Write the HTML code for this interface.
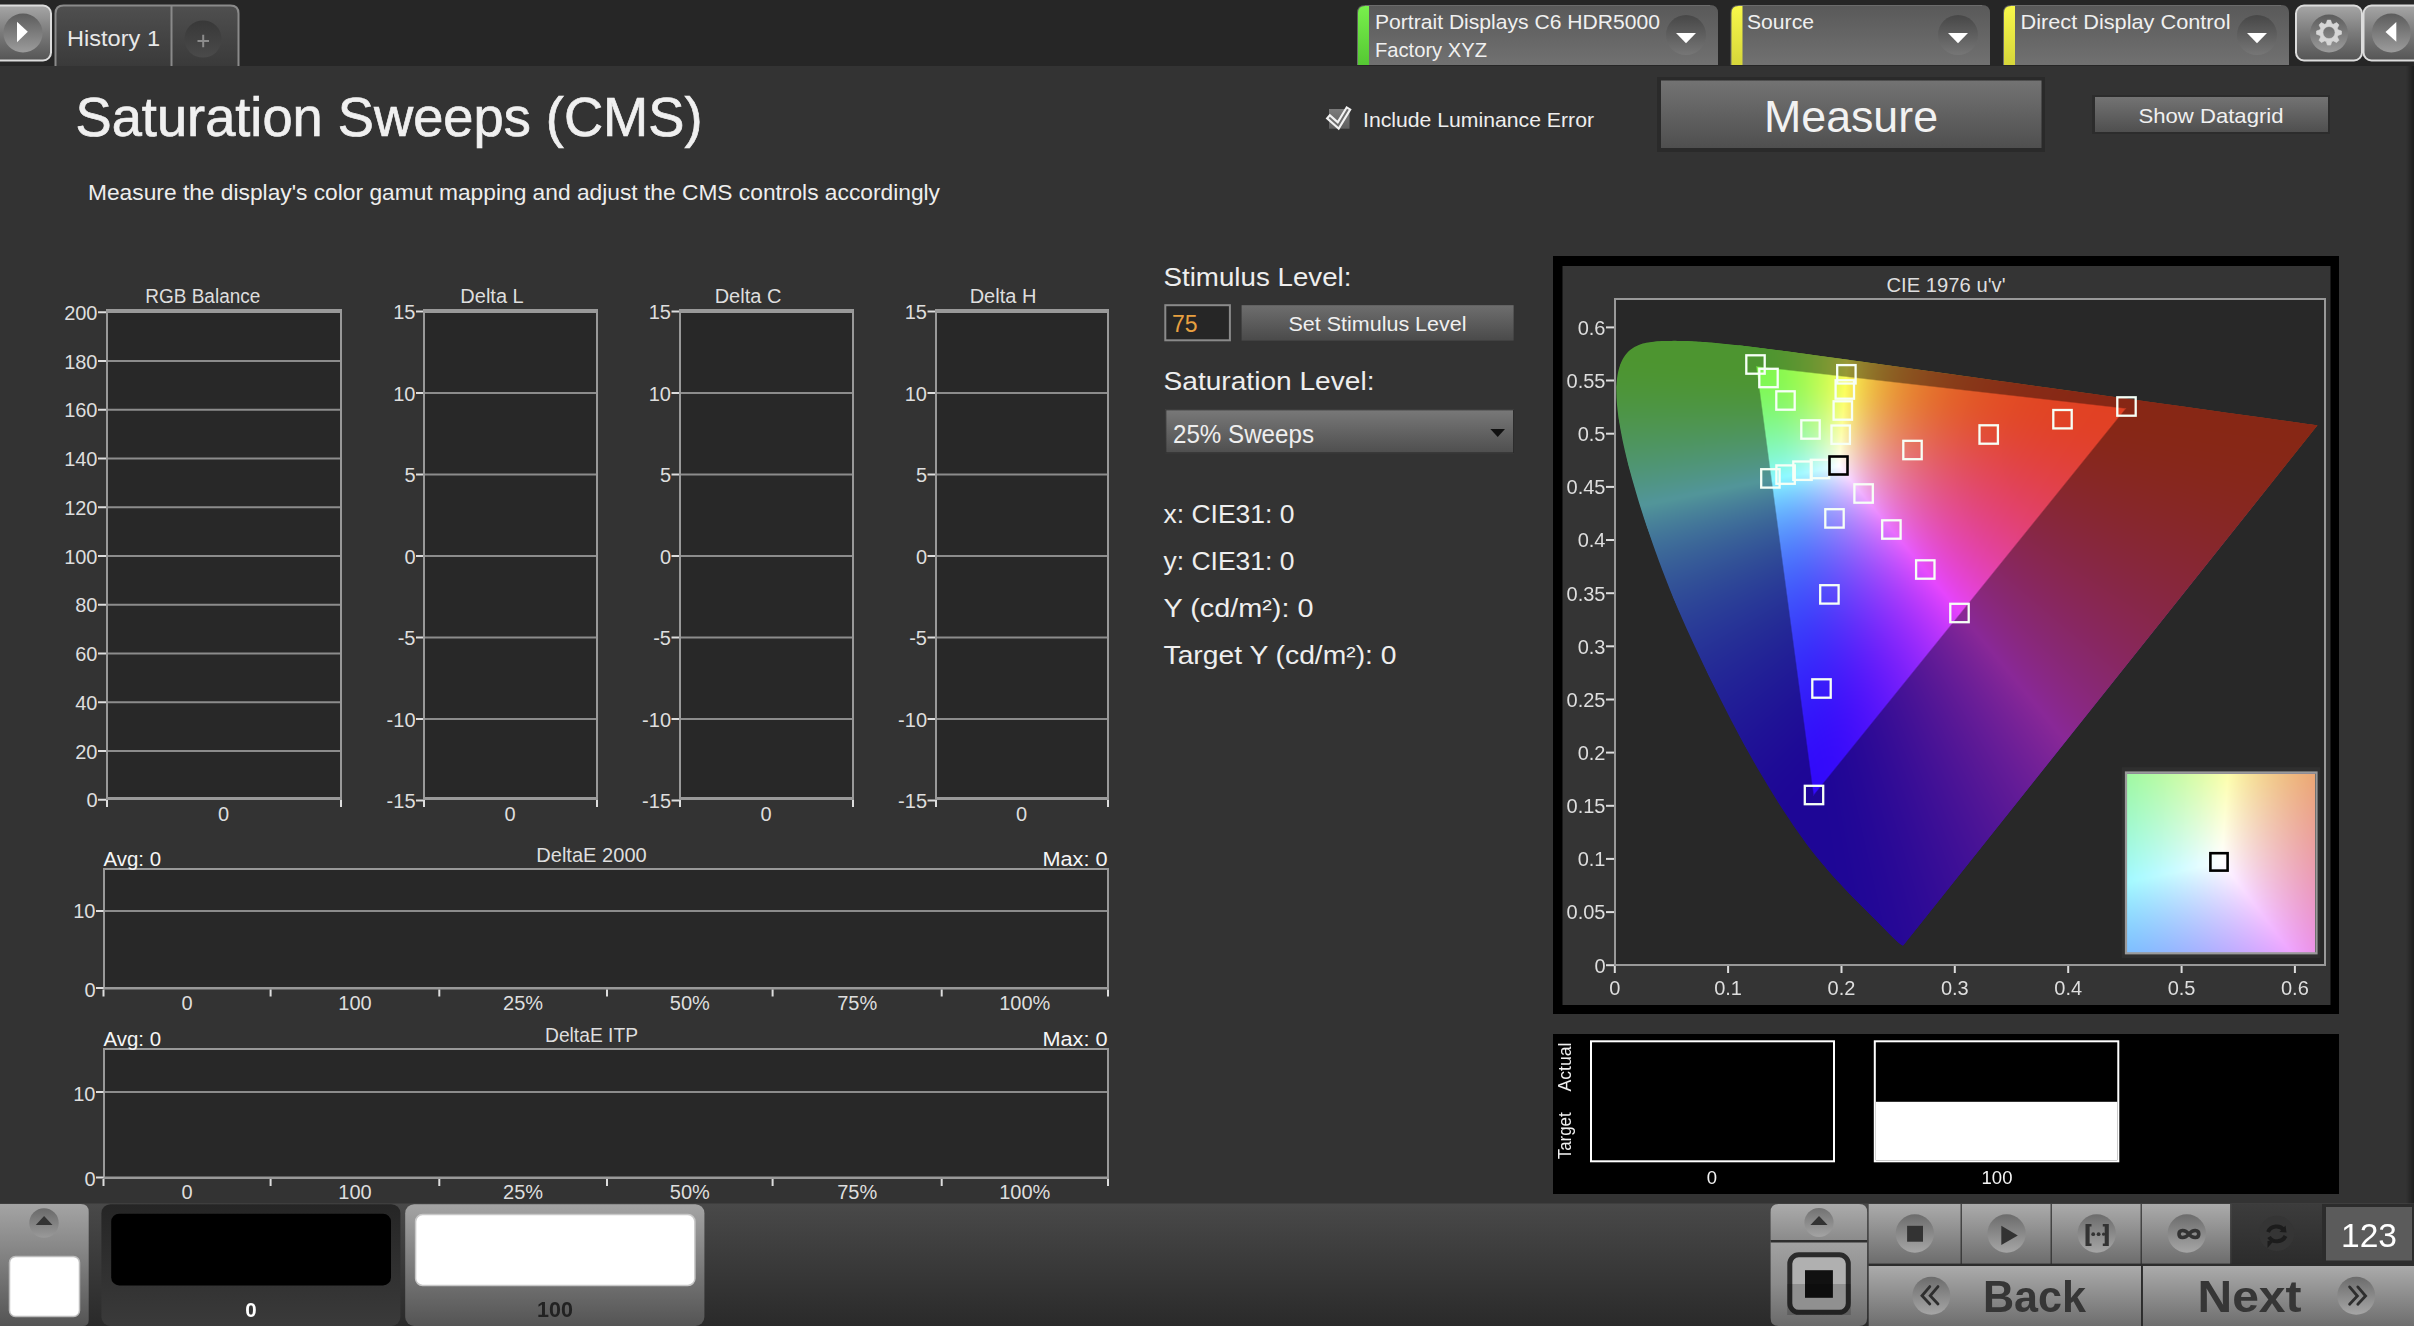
<!DOCTYPE html>
<html><head><meta charset="utf-8"><title>Saturation Sweeps (CMS)</title>
<style>
html,body{margin:0;padding:0;width:2414px;height:1326px;overflow:hidden;background:#333;}
svg{position:absolute;left:0;top:0;font-family:'Liberation Sans', sans-serif;}
canvas{position:absolute;}
</style></head><body>
<svg width="2414" height="1326" viewBox="0 0 2414 1326"><defs><linearGradient id="gBtn" x1="0" y1="0" x2="0" y2="1"><stop offset="0" stop-color="#a6a6a6"/><stop offset="0.5" stop-color="#7a7a7a"/><stop offset="1" stop-color="#555"/></linearGradient><linearGradient id="gCirc" x1="0" y1="0" x2="0" y2="1"><stop offset="0" stop-color="#5c5c5c"/><stop offset="1" stop-color="#9c9c9c"/></linearGradient><linearGradient id="gTab" x1="0" y1="0" x2="0" y2="1"><stop offset="0" stop-color="#4f4f4f"/><stop offset="1" stop-color="#3a3a3a"/></linearGradient><linearGradient id="gTabC" x1="0" y1="0" x2="0" y2="1"><stop offset="0" stop-color="#383838"/><stop offset="1" stop-color="#4a4a4a"/></linearGradient><linearGradient id="gDD" x1="0" y1="0" x2="0" y2="1"><stop offset="0" stop-color="#595959"/><stop offset="1" stop-color="#717171"/></linearGradient><linearGradient id="gDDc" x1="0" y1="0" x2="0" y2="1"><stop offset="0" stop-color="#474747"/><stop offset="1" stop-color="#767676"/></linearGradient><linearGradient id="gGreen" x1="0" y1="0" x2="0" y2="1"><stop offset="0" stop-color="#78f04c"/><stop offset="1" stop-color="#55c833"/></linearGradient><linearGradient id="gYel" x1="0" y1="0" x2="0" y2="1"><stop offset="0" stop-color="#f8f84a"/><stop offset="1" stop-color="#d6d63a"/></linearGradient><linearGradient id="gMeas" x1="0" y1="0" x2="0" y2="1"><stop offset="0" stop-color="#737373"/><stop offset="1" stop-color="#4f4f4f"/></linearGradient><linearGradient id="gSet" x1="0" y1="0" x2="0" y2="1"><stop offset="0" stop-color="#6e6e6e"/><stop offset="1" stop-color="#4a4a4a"/></linearGradient><linearGradient id="gSel" x1="0" y1="0" x2="0" y2="1"><stop offset="0" stop-color="#797979"/><stop offset="1" stop-color="#4e4e4e"/></linearGradient><linearGradient id="gBar" x1="0" y1="0" x2="0" y2="1"><stop offset="0" stop-color="#494949"/><stop offset="1" stop-color="#2a2a2a"/></linearGradient><linearGradient id="gTileL" x1="0" y1="0" x2="0" y2="1"><stop offset="0" stop-color="#a4a4a4"/><stop offset="1" stop-color="#545454"/></linearGradient><linearGradient id="gCtl" x1="0" y1="0" x2="0" y2="1"><stop offset="0" stop-color="#ababab"/><stop offset="1" stop-color="#6c6c6c"/></linearGradient><linearGradient id="gCtlC" x1="0" y1="0" x2="0" y2="1"><stop offset="0" stop-color="#6c6c6c"/><stop offset="1" stop-color="#a6a6a6"/></linearGradient><linearGradient id="gCtlTop" x1="0" y1="0" x2="0" y2="1"><stop offset="0" stop-color="#ababab"/><stop offset="1" stop-color="#8a8a8a"/></linearGradient><linearGradient id="gCtlBot" x1="0" y1="0" x2="0" y2="1"><stop offset="0" stop-color="#a2a2a2"/><stop offset="0.5" stop-color="#8c8c8c"/><stop offset="1" stop-color="#6a6a6a"/></linearGradient><linearGradient id="gTile2" x1="0" y1="0" x2="0" y2="1"><stop offset="0" stop-color="#252525"/><stop offset="1" stop-color="#3a3a3a"/></linearGradient><linearGradient id="gChk" x1="0" y1="0" x2="0" y2="1"><stop offset="0" stop-color="#7c7c7c"/><stop offset="1" stop-color="#5e5e5e"/></linearGradient><linearGradient id="gDark" x1="0" y1="0" x2="0" y2="1"><stop offset="0" stop-color="#3c3c3c"/><stop offset="1" stop-color="#2c2c2c"/></linearGradient><linearGradient id="gShadowR" x1="0" y1="0" x2="1" y2="0"><stop offset="0" stop-color="rgba(0,0,0,0)"/><stop offset="1" stop-color="rgba(0,0,0,0.42)"/></linearGradient><linearGradient id="fbV" gradientUnits="userSpaceOnUse" x1="0" y1="345" x2="0" y2="945"><stop offset="0" stop-color="#4d9a32"/><stop offset="0.2" stop-color="#4e9a48"/><stop offset="0.3" stop-color="#4a9090"/><stop offset="0.5" stop-color="#2c4090"/><stop offset="0.75" stop-color="#1e1294"/><stop offset="1" stop-color="#200896"/></linearGradient><linearGradient id="fbR" gradientUnits="userSpaceOnUse" x1="1900" y1="930" x2="2300" y2="430"><stop offset="0" stop-color="#22089a"/><stop offset="0.35" stop-color="#5a1c96"/><stop offset="0.6" stop-color="#862a7a"/><stop offset="1" stop-color="#8a2a1c"/></linearGradient><linearGradient id="fbTop" gradientUnits="userSpaceOnUse" x1="1760" y1="0" x2="2130" y2="0"><stop offset="0" stop-color="#4d9a32"/><stop offset="0.3" stop-color="#8a8c28"/><stop offset="0.55" stop-color="#8c5a20"/><stop offset="1" stop-color="#8a2a1a"/></linearGradient><linearGradient id="fbG" gradientUnits="userSpaceOnUse" x1="1757" y1="367" x2="1960" y2="600"><stop offset="0" stop-color="rgba(128,248,80,1)"/><stop offset="1" stop-color="rgba(128,248,80,0)"/></linearGradient><linearGradient id="fbB" gradientUnits="userSpaceOnUse" x1="1813" y1="795" x2="1900" y2="520"><stop offset="0" stop-color="rgba(50,10,250,1)"/><stop offset="1" stop-color="rgba(50,10,250,0)"/></linearGradient><linearGradient id="fbRd" gradientUnits="userSpaceOnUse" x1="2125" y1="408" x2="1880" y2="520"><stop offset="0" stop-color="rgba(225,65,35,1)"/><stop offset="1" stop-color="rgba(225,65,35,0)"/></linearGradient><radialGradient id="fbW" cx="1839" cy="466" r="150" gradientUnits="userSpaceOnUse"><stop offset="0" stop-color="#fff"/><stop offset="0.35" stop-color="rgba(255,255,255,0.85)"/><stop offset="1" stop-color="rgba(255,255,255,0)"/></radialGradient><clipPath id="fbClip"><path d="M1903.3 945.3 L1902.4 945.3 L1900.7 944.3 L1897.8 941.9 L1893.8 938.2 L1888.1 932.6 L1880.8 925.1 L1871.7 915.9 L1859.7 904.0 L1845.3 889.4 L1827.6 870.0 L1806.3 843.7 L1778.1 802.3 L1744.8 745.8 L1708.7 675.4 L1673.9 599.3 L1646.7 526.3 L1628.3 464.7 L1618.7 418.9 L1616.4 387.0 L1620.1 365.1 L1628.7 351.2 L1641.0 344.2 L1655.6 341.5 L1671.5 340.9 L1687.7 341.1 L1704.6 342.1 L1722.8 343.7 L1742.6 345.8 L1764.3 348.5 L1788.4 351.6 L1815.0 355.3 L1844.5 359.3 L1876.9 363.8 L1912.2 368.7 L1950.3 374.1 L1990.6 379.7 L2032.0 385.5 L2072.2 391.1 L2111.3 396.5 L2146.7 401.4 L2177.9 405.8 L2204.6 409.6 L2226.9 412.7 L2245.7 415.3 L2261.9 417.6 L2275.7 419.5 L2286.9 421.0 L2295.5 422.2 L2302.3 423.2 L2307.3 423.9 L2310.6 424.3 L2313.3 424.7 L2317.5 425.3 Z"/></clipPath><radialGradient id="fbIn" cx="0.5" cy="0.5" r="0.7"><stop offset="0" stop-color="#fff"/><stop offset="1" stop-color="#c8b8f0"/></radialGradient></defs><rect x="0" y="0" width="2414" height="1326" fill="#333333" /><rect x="0" y="0" width="2414" height="66" fill="#262626" /><rect x="-12" y="5.5" width="63" height="55" rx="8" fill="url(#gBtn)" stroke="#dcdcdc" stroke-width="2"/><circle cx="23" cy="33" r="19.6" fill="url(#gCirc)"/><path d="M17 21.7 L27.8 31.8 L17 42.2 Z" fill="#fff"/><path d="M55.5 66 V13.5 Q55.5 5.5 63.5 5.5 H230.5 Q238.5 5.5 238.5 13.5 V66" fill="url(#gTab)" stroke="#8a8a8a" stroke-width="2"/><line x1="171.5" y1="6" x2="171.5" y2="66" stroke="#8a8a8a" stroke-width="2"/><circle cx="203" cy="39" r="18.6" fill="url(#gTabC)"/><path d="M197.5 41 H209 M203.2 34.8 V47.2" stroke="#8c8c8c" stroke-width="2"/><text x="67.0" y="46.0" font-size="22" fill="#e8e8e8" textLength="93.0" lengthAdjust="spacingAndGlyphs" >History 1</text><path d="M1357 65 V13 Q1357 5 1365 5 H1710 Q1718 5 1718 13 V65 Z" fill="url(#gDD)"/><path d="M1358 65 V13 Q1358 6 1365 6 H1369 V65 Z" fill="url(#gGreen)"/><line x1="1365" y1="5.5" x2="1710" y2="5.5" stroke="#6c6c6c" stroke-width="1"/><circle cx="1686" cy="35" r="20" fill="url(#gDDc)"/><path d="M1676 33 H1696 L1686 43.2 Z" fill="#fff"/><text x="1375.0" y="28.8" font-size="20.5" fill="#f0f0f0" textLength="285.0" lengthAdjust="spacingAndGlyphs" >Portrait Displays C6 HDR5000</text><text x="1375.0" y="57.3" font-size="20.5" fill="#f0f0f0" textLength="112.0" lengthAdjust="spacingAndGlyphs" >Factory XYZ</text><path d="M1730.5 65 V13 Q1730.5 5 1738.5 5 H1982 Q1990 5 1990 13 V65 Z" fill="url(#gDD)"/><path d="M1731.5 65 V13 Q1731.5 6 1738.5 6 H1742.5 V65 Z" fill="url(#gYel)"/><line x1="1738.5" y1="5.5" x2="1982" y2="5.5" stroke="#6c6c6c" stroke-width="1"/><circle cx="1958" cy="35" r="20" fill="url(#gDDc)"/><path d="M1948 33 H1968 L1958 43.2 Z" fill="#fff"/><text x="1747.0" y="28.8" font-size="20.5" fill="#f0f0f0" textLength="67.0" lengthAdjust="spacingAndGlyphs" >Source</text><path d="M2003 65 V13 Q2003 5 2011 5 H2281 Q2289 5 2289 13 V65 Z" fill="url(#gDD)"/><path d="M2004 65 V13 Q2004 6 2011 6 H2015 V65 Z" fill="url(#gYel)"/><line x1="2011" y1="5.5" x2="2281" y2="5.5" stroke="#6c6c6c" stroke-width="1"/><circle cx="2257" cy="35" r="20" fill="url(#gDDc)"/><path d="M2247 33 H2267 L2257 43.2 Z" fill="#fff"/><text x="2020.5" y="28.8" font-size="20.5" fill="#f0f0f0" textLength="210.0" lengthAdjust="spacingAndGlyphs" >Direct Display Control</text><rect x="2296" y="5.5" width="66" height="55" rx="8" fill="url(#gBtn)" stroke="#dcdcdc" stroke-width="2"/><circle cx="2329" cy="33.5" r="19" fill="url(#gCirc)"/><path d="M2326.22 23.62 L2327.37 20.11 L2330.63 20.11 L2331.78 23.62 L2332.60 23.92 L2333.39 24.29 L2336.68 22.61 L2338.99 24.92 L2337.31 28.21 L2337.68 29.00 L2337.98 29.82 L2341.49 30.97 L2341.49 34.23 L2337.98 35.38 L2337.68 36.20 L2337.31 36.99 L2338.99 40.28 L2336.68 42.59 L2333.39 40.91 L2332.60 41.28 L2331.78 41.58 L2330.63 45.09 L2327.37 45.09 L2326.22 41.58 L2325.40 41.28 L2324.61 40.91 L2321.32 42.59 L2319.01 40.28 L2320.69 36.99 L2320.32 36.20 L2320.02 35.38 L2316.51 34.23 L2316.51 30.97 L2320.02 29.82 L2320.32 29.00 L2320.69 28.21 L2319.01 24.92 L2321.32 22.61 L2324.61 24.29 L2325.40 23.92 Z M2335.1 32.6 A6.1 6.1 0 1 0 2322.9 32.6 A6.1 6.1 0 1 0 2335.1 32.6 Z" fill="#d6d6d6" fill-rule="evenodd" stroke="#d6d6d6" stroke-width="0.6" stroke-linejoin="round"/><rect x="2363.5" y="5.5" width="66" height="55" rx="8" fill="url(#gBtn)" stroke="#dcdcdc" stroke-width="2"/><circle cx="2391.3" cy="33" r="19.5" fill="url(#gCirc)"/><path d="M2396.3 22 V41.8 L2385.5 32 Z" fill="#fff"/><text x="75.5" y="136.0" font-size="55" fill="#f0f0f0" textLength="627.0" lengthAdjust="spacingAndGlyphs" stroke="#f0f0f0" stroke-width="0.7">Saturation Sweeps (CMS)</text><text x="88.0" y="200.0" font-size="22.5" fill="#eeeeee" textLength="852.0" lengthAdjust="spacingAndGlyphs" >Measure the display's color gamut mapping and adjust the CMS controls accordingly</text><rect x="1329" y="109" width="20.5" height="19.7" fill="url(#gChk)"/><path d="M1330 118.2 L1338.2 125.4 L1347.4 110.2" stroke="#f2f2f2" stroke-width="6.2" fill="none" stroke-linejoin="miter" stroke-linecap="square"/><path d="M1330 118.2 L1338.2 125.4 L1347.4 110.2" stroke="#6e6e6e" stroke-width="2.0" fill="none" stroke-linejoin="miter" stroke-linecap="square"/><text x="1363.0" y="127.0" font-size="21" fill="#eeeeee" textLength="231.0" lengthAdjust="spacingAndGlyphs" >Include Luminance Error</text><rect x="1657" y="77" width="388" height="75" fill="#2a2a2a" /><rect x="1661" y="80.5" width="380.5" height="67.5" fill="url(#gMeas)" /><text x="1764.0" y="131.5" font-size="45" fill="#f2f2f2" textLength="174.0" lengthAdjust="spacingAndGlyphs" >Measure</text><rect x="2092" y="95" width="238" height="39" fill="#2c2c2c" /><rect x="2095" y="97" width="233" height="35" fill="url(#gMeas)" /><text x="2138.5" y="122.8" font-size="21" fill="#f0f0f0" textLength="145.0" lengthAdjust="spacingAndGlyphs" >Show Datagrid</text><rect x="106" y="309" width="235" height="491" fill="#282828" /><rect x="98.0" y="311.25" width="8.0" height="2" fill="#dddddd" /><text x="97.5" y="319.9" font-size="20" fill="#dedede" text-anchor="end" >200</text><rect x="106" y="360.0" width="235" height="2" fill="#8c8c8c" /><rect x="98.0" y="360.0" width="8.0" height="2" fill="#dddddd" /><text x="97.5" y="368.6" font-size="20" fill="#dedede" text-anchor="end" >180</text><rect x="106" y="408.75" width="235" height="2" fill="#8c8c8c" /><rect x="98.0" y="408.75" width="8.0" height="2" fill="#dddddd" /><text x="97.5" y="417.4" font-size="20" fill="#dedede" text-anchor="end" >160</text><rect x="106" y="457.5" width="235" height="2" fill="#8c8c8c" /><rect x="98.0" y="457.5" width="8.0" height="2" fill="#dddddd" /><text x="97.5" y="466.1" font-size="20" fill="#dedede" text-anchor="end" >140</text><rect x="106" y="506.25" width="235" height="2" fill="#8c8c8c" /><rect x="98.0" y="506.25" width="8.0" height="2" fill="#dddddd" /><text x="97.5" y="514.9" font-size="20" fill="#dedede" text-anchor="end" >120</text><rect x="106" y="555.0" width="235" height="2" fill="#8c8c8c" /><rect x="98.0" y="555.0" width="8.0" height="2" fill="#dddddd" /><text x="97.5" y="563.6" font-size="20" fill="#dedede" text-anchor="end" >100</text><rect x="106" y="603.75" width="235" height="2" fill="#8c8c8c" /><rect x="98.0" y="603.75" width="8.0" height="2" fill="#dddddd" /><text x="97.5" y="612.4" font-size="20" fill="#dedede" text-anchor="end" >80</text><rect x="106" y="652.5" width="235" height="2" fill="#8c8c8c" /><rect x="98.0" y="652.5" width="8.0" height="2" fill="#dddddd" /><text x="97.5" y="661.1" font-size="20" fill="#dedede" text-anchor="end" >60</text><rect x="106" y="701.25" width="235" height="2" fill="#8c8c8c" /><rect x="98.0" y="701.25" width="8.0" height="2" fill="#dddddd" /><text x="97.5" y="709.9" font-size="20" fill="#dedede" text-anchor="end" >40</text><rect x="106" y="750.0" width="235" height="2" fill="#8c8c8c" /><rect x="98.0" y="750.0" width="8.0" height="2" fill="#dddddd" /><text x="97.5" y="758.6" font-size="20" fill="#dedede" text-anchor="end" >20</text><rect x="98.0" y="798.75" width="8.0" height="2" fill="#dddddd" /><text x="97.5" y="807.4" font-size="20" fill="#dedede" text-anchor="end" >0</text><rect x="106" y="309" width="236" height="4" fill="#999999" /><rect x="106" y="797" width="236" height="3" fill="#999999" /><rect x="106" y="309" width="2" height="491" fill="#999999" /><rect x="340" y="309" width="2" height="491" fill="#999999" /><rect x="106" y="800" width="2" height="7" fill="#dddddd" /><rect x="340" y="800" width="2" height="7" fill="#dddddd" /><text x="223.5" y="821.0" font-size="20" fill="#dedede" text-anchor="middle" >0</text><text x="202.8" y="303.0" font-size="20" fill="#dedede" text-anchor="middle" textLength="115.0" lengthAdjust="spacingAndGlyphs" >RGB Balance</text><rect x="423" y="309" width="174" height="491" fill="#282828" /><rect x="416.0" y="310.5" width="7.0" height="2" fill="#dddddd" /><text x="415.5" y="319.1" font-size="20" fill="#dedede" text-anchor="end" >15</text><rect x="423" y="392.0" width="174" height="2" fill="#8c8c8c" /><rect x="416.0" y="392.0" width="7.0" height="2" fill="#dddddd" /><text x="415.5" y="400.6" font-size="20" fill="#dedede" text-anchor="end" >10</text><rect x="423" y="473.5" width="174" height="2" fill="#8c8c8c" /><rect x="416.0" y="473.5" width="7.0" height="2" fill="#dddddd" /><text x="415.5" y="482.1" font-size="20" fill="#dedede" text-anchor="end" >5</text><rect x="423" y="555.0" width="174" height="2" fill="#8c8c8c" /><rect x="416.0" y="555.0" width="7.0" height="2" fill="#dddddd" /><text x="415.5" y="563.6" font-size="20" fill="#dedede" text-anchor="end" >0</text><rect x="423" y="636.5" width="174" height="2" fill="#8c8c8c" /><rect x="416.0" y="636.5" width="7.0" height="2" fill="#dddddd" /><text x="415.5" y="645.1" font-size="20" fill="#dedede" text-anchor="end" >-5</text><rect x="423" y="718.0" width="174" height="2" fill="#8c8c8c" /><rect x="416.0" y="718.0" width="7.0" height="2" fill="#dddddd" /><text x="415.5" y="726.6" font-size="20" fill="#dedede" text-anchor="end" >-10</text><rect x="416.0" y="799.5" width="7.0" height="2" fill="#dddddd" /><text x="415.5" y="808.1" font-size="20" fill="#dedede" text-anchor="end" >-15</text><rect x="423" y="309" width="175" height="4" fill="#999999" /><rect x="423" y="797" width="175" height="3" fill="#999999" /><rect x="423" y="309" width="2" height="491" fill="#999999" /><rect x="596" y="309" width="2" height="491" fill="#999999" /><rect x="423" y="800" width="2" height="7" fill="#dddddd" /><rect x="596" y="800" width="2" height="7" fill="#dddddd" /><text x="510.0" y="821.0" font-size="20" fill="#dedede" text-anchor="middle" >0</text><text x="492.0" y="303.0" font-size="20" fill="#dedede" text-anchor="middle" >Delta L</text><rect x="679" y="309" width="174" height="491" fill="#282828" /><rect x="671.5" y="310.5" width="7.5" height="2" fill="#dddddd" /><text x="671.0" y="319.1" font-size="20" fill="#dedede" text-anchor="end" >15</text><rect x="679" y="392.0" width="174" height="2" fill="#8c8c8c" /><rect x="671.5" y="392.0" width="7.5" height="2" fill="#dddddd" /><text x="671.0" y="400.6" font-size="20" fill="#dedede" text-anchor="end" >10</text><rect x="679" y="473.5" width="174" height="2" fill="#8c8c8c" /><rect x="671.5" y="473.5" width="7.5" height="2" fill="#dddddd" /><text x="671.0" y="482.1" font-size="20" fill="#dedede" text-anchor="end" >5</text><rect x="679" y="555.0" width="174" height="2" fill="#8c8c8c" /><rect x="671.5" y="555.0" width="7.5" height="2" fill="#dddddd" /><text x="671.0" y="563.6" font-size="20" fill="#dedede" text-anchor="end" >0</text><rect x="679" y="636.5" width="174" height="2" fill="#8c8c8c" /><rect x="671.5" y="636.5" width="7.5" height="2" fill="#dddddd" /><text x="671.0" y="645.1" font-size="20" fill="#dedede" text-anchor="end" >-5</text><rect x="679" y="718.0" width="174" height="2" fill="#8c8c8c" /><rect x="671.5" y="718.0" width="7.5" height="2" fill="#dddddd" /><text x="671.0" y="726.6" font-size="20" fill="#dedede" text-anchor="end" >-10</text><rect x="671.5" y="799.5" width="7.5" height="2" fill="#dddddd" /><text x="671.0" y="808.1" font-size="20" fill="#dedede" text-anchor="end" >-15</text><rect x="679" y="309" width="175" height="4" fill="#999999" /><rect x="679" y="797" width="175" height="3" fill="#999999" /><rect x="679" y="309" width="2" height="491" fill="#999999" /><rect x="852" y="309" width="2" height="491" fill="#999999" /><rect x="679" y="800" width="2" height="7" fill="#dddddd" /><rect x="852" y="800" width="2" height="7" fill="#dddddd" /><text x="766.0" y="821.0" font-size="20" fill="#dedede" text-anchor="middle" >0</text><text x="748.0" y="303.0" font-size="20" fill="#dedede" text-anchor="middle" >Delta C</text><rect x="935" y="309" width="173" height="491" fill="#282828" /><rect x="927.5" y="310.5" width="7.5" height="2" fill="#dddddd" /><text x="927.0" y="319.1" font-size="20" fill="#dedede" text-anchor="end" >15</text><rect x="935" y="392.0" width="173" height="2" fill="#8c8c8c" /><rect x="927.5" y="392.0" width="7.5" height="2" fill="#dddddd" /><text x="927.0" y="400.6" font-size="20" fill="#dedede" text-anchor="end" >10</text><rect x="935" y="473.5" width="173" height="2" fill="#8c8c8c" /><rect x="927.5" y="473.5" width="7.5" height="2" fill="#dddddd" /><text x="927.0" y="482.1" font-size="20" fill="#dedede" text-anchor="end" >5</text><rect x="935" y="555.0" width="173" height="2" fill="#8c8c8c" /><rect x="927.5" y="555.0" width="7.5" height="2" fill="#dddddd" /><text x="927.0" y="563.6" font-size="20" fill="#dedede" text-anchor="end" >0</text><rect x="935" y="636.5" width="173" height="2" fill="#8c8c8c" /><rect x="927.5" y="636.5" width="7.5" height="2" fill="#dddddd" /><text x="927.0" y="645.1" font-size="20" fill="#dedede" text-anchor="end" >-5</text><rect x="935" y="718.0" width="173" height="2" fill="#8c8c8c" /><rect x="927.5" y="718.0" width="7.5" height="2" fill="#dddddd" /><text x="927.0" y="726.6" font-size="20" fill="#dedede" text-anchor="end" >-10</text><rect x="927.5" y="799.5" width="7.5" height="2" fill="#dddddd" /><text x="927.0" y="808.1" font-size="20" fill="#dedede" text-anchor="end" >-15</text><rect x="935" y="309" width="174" height="4" fill="#999999" /><rect x="935" y="797" width="174" height="3" fill="#999999" /><rect x="935" y="309" width="2" height="491" fill="#999999" /><rect x="1107" y="309" width="2" height="491" fill="#999999" /><rect x="935" y="800" width="2" height="7" fill="#dddddd" /><rect x="1107" y="800" width="2" height="7" fill="#dddddd" /><text x="1021.5" y="821.0" font-size="20" fill="#dedede" text-anchor="middle" >0</text><text x="1003.0" y="303.0" font-size="20" fill="#dedede" text-anchor="middle" >Delta H</text><rect x="103.5" y="869" width="1004.5" height="119" fill="#282828" /><rect x="103.5" y="910" width="1004.5" height="2" fill="#8c8c8c" /><rect x="103.5" y="868" width="1005.5" height="2" fill="#999999" /><rect x="103.5" y="987" width="1005.5" height="2.5" fill="#999999" /><rect x="103.0" y="868" width="2" height="121" fill="#999999" /><rect x="1107" y="868" width="2" height="121" fill="#999999" /><rect x="96" y="910" width="7.5" height="2" fill="#dddddd" /><text x="95.5" y="918.3" font-size="20" fill="#dedede" text-anchor="end" >10</text><rect x="96" y="987" width="7.5" height="2" fill="#dddddd" /><text x="95.5" y="996.8" font-size="20" fill="#dedede" text-anchor="end" >0</text><rect x="102.5" y="989.5" width="2" height="7" fill="#dddddd" /><rect x="269.6" y="989.5" width="2" height="7" fill="#dddddd" /><rect x="438.3" y="989.5" width="2" height="7" fill="#dddddd" /><rect x="606" y="989.5" width="2" height="7" fill="#dddddd" /><rect x="771.6" y="989.5" width="2" height="7" fill="#dddddd" /><rect x="940.7" y="989.5" width="2" height="7" fill="#dddddd" /><rect x="1107" y="989.5" width="2" height="7" fill="#dddddd" /><text x="187.1" y="1009.6" font-size="20" fill="#dedede" text-anchor="middle" >0</text><text x="355.0" y="1009.6" font-size="20" fill="#dedede" text-anchor="middle" >100</text><text x="523.1" y="1009.6" font-size="20" fill="#dedede" text-anchor="middle" >25%</text><text x="689.8" y="1009.6" font-size="20" fill="#dedede" text-anchor="middle" >50%</text><text x="857.2" y="1009.6" font-size="20" fill="#dedede" text-anchor="middle" >75%</text><text x="1024.8" y="1009.6" font-size="20" fill="#dedede" text-anchor="middle" >100%</text><text x="103.5" y="865.8" font-size="20" fill="#f6f6f6" textLength="57.5" lengthAdjust="spacingAndGlyphs" >Avg: 0</text><text x="1042.5" y="865.8" font-size="20" fill="#f6f6f6" textLength="65.0" lengthAdjust="spacingAndGlyphs" >Max: 0</text><text x="591.5" y="861.8" font-size="20.5" fill="#dedede" text-anchor="middle" textLength="110.5" lengthAdjust="spacingAndGlyphs" >DeltaE 2000</text><rect x="103.5" y="1049" width="1004.5" height="128.5" fill="#282828" /><rect x="103.5" y="1091" width="1004.5" height="2" fill="#8c8c8c" /><rect x="103.5" y="1048" width="1005.5" height="2" fill="#999999" /><rect x="103.5" y="1176.5" width="1005.5" height="2.5" fill="#999999" /><rect x="103.0" y="1048" width="2" height="130.5" fill="#999999" /><rect x="1107" y="1048" width="2" height="130.5" fill="#999999" /><rect x="96" y="1091" width="7.5" height="2" fill="#dddddd" /><text x="95.5" y="1100.6" font-size="20" fill="#dedede" text-anchor="end" >10</text><rect x="96" y="1176.5" width="7.5" height="2" fill="#dddddd" /><text x="95.5" y="1186.3" font-size="20" fill="#dedede" text-anchor="end" >0</text><rect x="102.5" y="1179.0" width="2" height="7" fill="#dddddd" /><rect x="269.6" y="1179.0" width="2" height="7" fill="#dddddd" /><rect x="438.3" y="1179.0" width="2" height="7" fill="#dddddd" /><rect x="606" y="1179.0" width="2" height="7" fill="#dddddd" /><rect x="771.6" y="1179.0" width="2" height="7" fill="#dddddd" /><rect x="940.7" y="1179.0" width="2" height="7" fill="#dddddd" /><rect x="1107" y="1179.0" width="2" height="7" fill="#dddddd" /><text x="187.1" y="1199.4" font-size="20" fill="#dedede" text-anchor="middle" >0</text><text x="355.0" y="1199.4" font-size="20" fill="#dedede" text-anchor="middle" >100</text><text x="523.1" y="1199.4" font-size="20" fill="#dedede" text-anchor="middle" >25%</text><text x="689.8" y="1199.4" font-size="20" fill="#dedede" text-anchor="middle" >50%</text><text x="857.2" y="1199.4" font-size="20" fill="#dedede" text-anchor="middle" >75%</text><text x="1024.8" y="1199.4" font-size="20" fill="#dedede" text-anchor="middle" >100%</text><text x="103.5" y="1045.8" font-size="20" fill="#f6f6f6" textLength="57.5" lengthAdjust="spacingAndGlyphs" >Avg: 0</text><text x="1042.5" y="1045.8" font-size="20" fill="#f6f6f6" textLength="65.0" lengthAdjust="spacingAndGlyphs" >Max: 0</text><text x="591.5" y="1041.8" font-size="20.5" fill="#dedede" text-anchor="middle" textLength="93.0" lengthAdjust="spacingAndGlyphs" >DeltaE ITP</text><text x="1163.5" y="285.8" font-size="25.5" fill="#eeeeee" textLength="188.0" lengthAdjust="spacingAndGlyphs" >Stimulus Level:</text><rect x="1165.3" y="305.2" width="64.6" height="35.1" fill="#262626" stroke="#8a8a8a" stroke-width="2"/><text x="1172.0" y="332.0" font-size="23" fill="#e8a040" >75</text><rect x="1241.6" y="305.2" width="272" height="35.4" fill="url(#gSet)" /><text x="1288.5" y="330.9" font-size="21" fill="#f0f0f0" textLength="178.0" lengthAdjust="spacingAndGlyphs" >Set Stimulus Level</text><text x="1163.5" y="389.9" font-size="25.5" fill="#eeeeee" textLength="211.0" lengthAdjust="spacingAndGlyphs" >Saturation Level:</text><rect x="1165.3" y="409.3" width="348.7" height="44.1" fill="url(#gSel)" /><rect x="1165.8" y="409.8" width="347.7" height="43.1" fill="none" stroke="#2c2c2c" stroke-width="1"/><text x="1173.0" y="443.0" font-size="25" fill="#eeeeee" textLength="141.0" lengthAdjust="spacingAndGlyphs" >25% Sweeps</text><path d="M1490.4 429 H1505 L1497.7 437 Z" fill="#111"/><text x="1163.5" y="522.7" font-size="25.5" fill="#eeeeee" textLength="131.0" lengthAdjust="spacingAndGlyphs" >x: CIE31: 0</text><text x="1163.5" y="569.6" font-size="25.5" fill="#eeeeee" textLength="131.0" lengthAdjust="spacingAndGlyphs" >y: CIE31: 0</text><text x="1163.5" y="617.1" font-size="25.5" fill="#eeeeee" textLength="150.0" lengthAdjust="spacingAndGlyphs" >Y (cd/m²): 0</text><text x="1163.5" y="663.9" font-size="25.5" fill="#eeeeee" textLength="233.0" lengthAdjust="spacingAndGlyphs" >Target Y (cd/m²): 0</text><rect x="1553" y="256" width="786" height="758" fill="#000" /><rect x="1562.5" y="266" width="768" height="739" fill="#343434" /><text x="1886.5" y="291.8" font-size="21" fill="#dedede" textLength="119.0" lengthAdjust="spacingAndGlyphs" >CIE 1976 u'v'</text><rect x="1615" y="299" width="710" height="666" fill="#282828" /><rect x="2121.7" y="767.3" width="198.5" height="190.7" fill="#2f2f2f" /><g clip-path="url(#fbClip)"><path d="M1903.3 945.3 L1902.4 945.3 L1900.7 944.3 L1897.8 941.9 L1893.8 938.2 L1888.1 932.6 L1880.8 925.1 L1871.7 915.9 L1859.7 904.0 L1845.3 889.4 L1827.6 870.0 L1806.3 843.7 L1778.1 802.3 L1744.8 745.8 L1708.7 675.4 L1673.9 599.3 L1646.7 526.3 L1628.3 464.7 L1618.7 418.9 L1616.4 387.0 L1620.1 365.1 L1628.7 351.2 L1641.0 344.2 L1655.6 341.5 L1671.5 340.9 L1687.7 341.1 L1704.6 342.1 L1722.8 343.7 L1742.6 345.8 L1764.3 348.5 L1788.4 351.6 L1815.0 355.3 L1844.5 359.3 L1876.9 363.8 L1912.2 368.7 L1950.3 374.1 L1990.6 379.7 L2032.0 385.5 L2072.2 391.1 L2111.3 396.5 L2146.7 401.4 L2177.9 405.8 L2204.6 409.6 L2226.9 412.7 L2245.7 415.3 L2261.9 417.6 L2275.7 419.5 L2286.9 421.0 L2295.5 422.2 L2302.3 423.2 L2307.3 423.9 L2310.6 424.3 L2313.3 424.7 L2317.5 425.3 Z" fill="url(#fbV)"/><path d="M2125.7 408.5 L2330 420 L2330 980 L1880 980 L1813.7 795.0 Z" fill="url(#fbR)"/><path d="M1756.5 366.6 L1700 300 L2330 300 L2330 420 L2125.7 408.5 Z" fill="url(#fbTop)"/><path d="M2125.7 408.5 L1756.5 366.6 L1813.7 795.0 Z" fill="#c050d0"/><path d="M2125.7 408.5 L1756.5 366.6 L1813.7 795.0 Z" fill="url(#fbB)"/><path d="M2125.7 408.5 L1756.5 366.6 L1813.7 795.0 Z" fill="url(#fbRd)"/><path d="M2125.7 408.5 L1756.5 366.6 L1813.7 795.0 Z" fill="url(#fbG)"/><path d="M2125.7 408.5 L1756.5 366.6 L1813.7 795.0 Z" fill="url(#fbW)"/></g><rect x="2127" y="773.5" width="188" height="179" fill="url(#fbIn)"/></svg>
<canvas id="cie" width="710" height="666" style="left:1615px;top:299px;width:710px;height:666px"></canvas>
<canvas id="inset" width="188" height="179" style="left:2127px;top:773.5px;width:188px;height:179px"></canvas>
<svg width="2414" height="1326" viewBox="0 0 2414 1326" style="pointer-events:none"><rect x="1614" y="298" width="712" height="2" fill="#999999"/><rect x="1614" y="964" width="712" height="2" fill="#999999"/><rect x="1614" y="298" width="2" height="668" fill="#999999"/><rect x="2324" y="298" width="2" height="668" fill="#999999"/><rect x="1606" y="964.2" width="8" height="2" fill="#dddddd" /><text x="1605.5" y="972.5" font-size="20" fill="#dedede" text-anchor="end" >0</text><rect x="1606" y="911.1" width="8" height="2" fill="#dddddd" /><text x="1605.5" y="919.4" font-size="20" fill="#dedede" text-anchor="end" >0.05</text><rect x="1606" y="857.9" width="8" height="2" fill="#dddddd" /><text x="1605.5" y="866.2" font-size="20" fill="#dedede" text-anchor="end" >0.1</text><rect x="1606" y="804.8" width="8" height="2" fill="#dddddd" /><text x="1605.5" y="813.0" font-size="20" fill="#dedede" text-anchor="end" >0.15</text><rect x="1606" y="751.6" width="8" height="2" fill="#dddddd" /><text x="1605.5" y="759.9" font-size="20" fill="#dedede" text-anchor="end" >0.2</text><rect x="1606" y="698.5" width="8" height="2" fill="#dddddd" /><text x="1605.5" y="706.8" font-size="20" fill="#dedede" text-anchor="end" >0.25</text><rect x="1606" y="645.3" width="8" height="2" fill="#dddddd" /><text x="1605.5" y="653.6" font-size="20" fill="#dedede" text-anchor="end" >0.3</text><rect x="1606" y="592.2" width="8" height="2" fill="#dddddd" /><text x="1605.5" y="600.5" font-size="20" fill="#dedede" text-anchor="end" >0.35</text><rect x="1606" y="539.0" width="8" height="2" fill="#dddddd" /><text x="1605.5" y="547.3" font-size="20" fill="#dedede" text-anchor="end" >0.4</text><rect x="1606" y="485.9" width="8" height="2" fill="#dddddd" /><text x="1605.5" y="494.2" font-size="20" fill="#dedede" text-anchor="end" >0.45</text><rect x="1606" y="432.7" width="8" height="2" fill="#dddddd" /><text x="1605.5" y="441.0" font-size="20" fill="#dedede" text-anchor="end" >0.5</text><rect x="1606" y="379.5" width="8" height="2" fill="#dddddd" /><text x="1605.5" y="387.8" font-size="20" fill="#dedede" text-anchor="end" >0.55</text><rect x="1606" y="326.4" width="8" height="2" fill="#dddddd" /><text x="1605.5" y="334.7" font-size="20" fill="#dedede" text-anchor="end" >0.6</text><rect x="1613.8" y="966" width="2" height="7" fill="#dddddd" /><text x="1614.8" y="994.7" font-size="20" fill="#dedede" text-anchor="middle" >0</text><rect x="1727.1" y="966" width="2" height="7" fill="#dddddd" /><text x="1728.1" y="994.7" font-size="20" fill="#dedede" text-anchor="middle" >0.1</text><rect x="1840.5" y="966" width="2" height="7" fill="#dddddd" /><text x="1841.5" y="994.7" font-size="20" fill="#dedede" text-anchor="middle" >0.2</text><rect x="1953.8" y="966" width="2" height="7" fill="#dddddd" /><text x="1954.8" y="994.7" font-size="20" fill="#dedede" text-anchor="middle" >0.3</text><rect x="2067.2" y="966" width="2" height="7" fill="#dddddd" /><text x="2068.2" y="994.7" font-size="20" fill="#dedede" text-anchor="middle" >0.4</text><rect x="2180.6" y="966" width="2" height="7" fill="#dddddd" /><text x="2181.6" y="994.7" font-size="20" fill="#dedede" text-anchor="middle" >0.5</text><rect x="2293.9" y="966" width="2" height="7" fill="#dddddd" /><text x="2294.9" y="994.7" font-size="20" fill="#dedede" text-anchor="middle" >0.6</text><rect x="2126" y="772.5" width="190.5" height="180.8" fill="none" stroke="#9a9a9a" stroke-width="2.2"/><rect x="1746.3" y="355.3" width="18.4" height="18.4" fill="none" stroke="#f6fff6" stroke-width="2.3"/><rect x="1759.3" y="368.8" width="18.4" height="18.4" fill="none" stroke="#f6fff6" stroke-width="2.3"/><rect x="1776.3" y="391.3" width="18.4" height="18.4" fill="none" stroke="#f6fff6" stroke-width="2.3"/><rect x="1801.3" y="420.3" width="18.4" height="18.4" fill="none" stroke="#f6fff6" stroke-width="2.3"/><rect x="1837.2" y="365.1" width="18.4" height="18.4" fill="none" stroke="#f6fff6" stroke-width="2.3"/><rect x="1835.6" y="380.3" width="18.4" height="18.4" fill="none" stroke="#f6fff6" stroke-width="2.3"/><rect x="1833.6" y="401.3" width="18.4" height="18.4" fill="none" stroke="#f6fff6" stroke-width="2.3"/><rect x="1831.5" y="425.5" width="18.4" height="18.4" fill="none" stroke="#f6fff6" stroke-width="2.3"/><rect x="1761.2" y="469.2" width="18.4" height="18.4" fill="none" stroke="#f6fff6" stroke-width="2.3"/><rect x="1776.4" y="465.4" width="18.4" height="18.4" fill="none" stroke="#f6fff6" stroke-width="2.3"/><rect x="1793.3" y="461.5" width="18.4" height="18.4" fill="none" stroke="#f6fff6" stroke-width="2.3"/><rect x="1810.8" y="459.8" width="18.4" height="18.4" fill="none" stroke="#f6fff6" stroke-width="2.3"/><rect x="1903.3" y="440.8" width="18.4" height="18.4" fill="none" stroke="#f6fff6" stroke-width="2.3"/><rect x="1979.5" y="425.3" width="18.4" height="18.4" fill="none" stroke="#f6fff6" stroke-width="2.3"/><rect x="2053.3" y="410.0" width="18.4" height="18.4" fill="none" stroke="#f6fff6" stroke-width="2.3"/><rect x="2117.3" y="397.3" width="18.4" height="18.4" fill="none" stroke="#f6fff6" stroke-width="2.3"/><rect x="1854.4" y="484.3" width="18.4" height="18.4" fill="none" stroke="#f6fff6" stroke-width="2.3"/><rect x="1882.2" y="520.3" width="18.4" height="18.4" fill="none" stroke="#f6fff6" stroke-width="2.3"/><rect x="1916.1" y="560.3" width="18.4" height="18.4" fill="none" stroke="#f6fff6" stroke-width="2.3"/><rect x="1950.3" y="603.8" width="18.4" height="18.4" fill="none" stroke="#f6fff6" stroke-width="2.3"/><rect x="1825.3" y="509.2" width="18.4" height="18.4" fill="none" stroke="#f6fff6" stroke-width="2.3"/><rect x="1820.2" y="585.2" width="18.4" height="18.4" fill="none" stroke="#f6fff6" stroke-width="2.3"/><rect x="1812.3" y="679.3" width="18.4" height="18.4" fill="none" stroke="#f6fff6" stroke-width="2.3"/><rect x="1804.8" y="785.8" width="18.4" height="18.4" fill="none" stroke="#f6fff6" stroke-width="2.3"/><rect x="1829.5" y="456.5" width="18" height="18" fill="none" stroke="#000" stroke-width="2.6"/><rect x="2210.4" y="853.2" width="17.2" height="17.4" fill="none" stroke="#000" stroke-width="2.6"/><rect x="1553" y="1034" width="786" height="160" fill="#000" /><rect x="1591" y="1041.3" width="243" height="120" fill="#000" stroke="#fff" stroke-width="2"/><rect x="1874.8" y="1041.3" width="243.5" height="120" fill="#000" stroke="#fff" stroke-width="2"/><rect x="1875.8" y="1101.8" width="241.5" height="58.5" fill="#fff" /><text x="1570.8" y="1067.0" font-size="19" fill="#f0f0f0" text-anchor="middle" textLength="49.0" lengthAdjust="spacingAndGlyphs" transform="rotate(-90 1570.8 1067)">Actual</text><text x="1570.8" y="1135.8" font-size="19" fill="#f0f0f0" text-anchor="middle" textLength="47.0" lengthAdjust="spacingAndGlyphs" transform="rotate(-90 1570.8 1135.8)">Target</text><text x="1712.0" y="1183.6" font-size="18.5" fill="#f4f4f4" text-anchor="middle" >0</text><text x="1997.0" y="1183.6" font-size="18.5" fill="#f4f4f4" text-anchor="middle" >100</text><rect x="0" y="1203.5" width="2414" height="122.5" fill="url(#gBar)" /><path d="M-10 1204 H80.7 Q88.7 1204 88.7 1212 V1320 Q88.7 1326 82.7 1326 H-10 Z" fill="url(#gTileL)"/><circle cx="44" cy="1223" r="14.7" fill="url(#gCirc)" opacity="0.8"/><path d="M35.8 1225 H52.5 L44.1 1216 Z" fill="#333"/><rect x="9.5" y="1256.5" width="70" height="60" rx="6" fill="#fff" stroke="#bdbdbd" stroke-width="1.5"/><rect x="101.4" y="1204.2" width="299" height="121.8" rx="9" fill="url(#gTile2)"/><rect x="111.2" y="1213.7" width="279.8" height="71.7" rx="8" fill="#000"/><text x="251.0" y="1316.6" font-size="20.5" fill="#ffffff" text-anchor="middle" font-weight="bold" >0</text><rect x="405.2" y="1204.2" width="299.2" height="121.8" rx="9" fill="url(#gTileL)"/><rect x="415.6" y="1214.6" width="279.3" height="70.8" rx="7" fill="#fff" stroke="#c8c8c8" stroke-width="1.5"/><text x="555.0" y="1317.0" font-size="21.5" fill="#222222" text-anchor="middle" font-weight="bold" >100</text><path d="M1770.6 1241 V1212 Q1770.6 1204 1778.6 1204 H1859.1 Q1867.1 1204 1867.1 1212 V1241 Z" fill="url(#gCtlTop)"/><path d="M1770.6 1241 H1867.1 V1318 Q1867.1 1326 1859.1 1326 H1778.6 Q1770.6 1326 1770.6 1318 Z" fill="url(#gCtlBot)"/><rect x="1770.6" y="1240" width="96.5" height="2.5" fill="#2e2e2e" /><circle cx="1819" cy="1222.5" r="14.6" fill="url(#gCtlC)" opacity="0.9"/><path d="M1810.4 1224.9 H1827.6 L1819 1215.9 Z" fill="#333"/><rect x="1789.8" y="1254.8" width="58.5" height="57.5" rx="9" fill="#b0b0b0" stroke="#2b2b2b" stroke-width="5"/><rect x="1805" y="1270.2" width="27.9" height="27.6" fill="#111" /><rect x="1787.2" y="1284" width="63.6" height="31" fill="rgba(0,0,0,0.18)" /><rect x="1868.7" y="1204" width="91.79999999999995" height="60.3" fill="url(#gCtl)" /><rect x="1962" y="1204" width="88.5" height="60.3" fill="url(#gCtl)" /><rect x="2052" y="1204" width="88.5" height="60.3" fill="url(#gCtl)" /><rect x="2142" y="1204" width="88.0" height="60.3" fill="url(#gCtl)" /><rect x="2231.5" y="1204" width="90.5" height="60.3" fill="url(#gDark)" /><circle cx="1914.8" cy="1233.5" r="19.2" fill="url(#gCtlC)"/><circle cx="2006.6" cy="1233.5" r="19.2" fill="url(#gCtlC)"/><circle cx="2096.7" cy="1233.5" r="19.2" fill="url(#gCtlC)"/><circle cx="2186.8" cy="1233.5" r="19.2" fill="url(#gCtlC)"/><circle cx="2276.7" cy="1233.4" r="17.7" fill="#353535"/><path d="M2284 1230 A9.5 9.5 0 0 0 2268 1232" stroke="#1c1c1c" stroke-width="4" fill="none"/><path d="M2285.5 1225.5 L2286.5 1232.5 L2279.5 1232 Z" fill="#1c1c1c"/><path d="M2269 1237 A9.5 9.5 0 0 0 2285.5 1236" stroke="#1c1c1c" stroke-width="4" fill="none"/><path d="M2267.5 1241 L2267.5 1248 L2274.5 1240 Z" fill="#1c1c1c"/><rect x="1907.1" y="1225.8" width="15.9" height="15.9" fill="#333" /><path d="M2001.3 1225.8 V1245 L2017.8 1235.4 Z" fill="#333"/><path d="M2085.5 1224 H2091.5 V1226.6 H2089.6 V1243.4 H2091.5 V1246 H2085.5 Z M2108.8 1224 H2102.8 V1226.6 H2104.7 V1243.4 H2102.8 V1246 H2108.8 Z" fill="#333"/><circle cx="2093.2" cy="1234.2" r="1.9" fill="#333"/><circle cx="2098.6" cy="1234.2" r="1.9" fill="#333"/><circle cx="2103.6" cy="1234.2" r="1.6" fill="#333"/><path d="M2188.9 1234 C2185 1229 2179 1229.5 2179 1234 C2179 1238.5 2185 1239 2188.9 1234 C2192.8 1229 2198.8 1229.5 2198.8 1234 C2198.8 1238.5 2192.8 1239 2188.9 1234 Z" stroke="#333" stroke-width="3.6" fill="none"/><rect x="2322" y="1204" width="92" height="62" fill="#2c2c2c" /><rect x="2326" y="1207" width="86" height="53.5" fill="#5b5b5b" /><text x="2341.0" y="1246.6" font-size="34" fill="#ffffff" textLength="56.0" lengthAdjust="spacingAndGlyphs" >123</text><rect x="1868.7" y="1265.8" width="272.3" height="62" fill="url(#gCtl)" /><rect x="2142.8" y="1265.8" width="272" height="62" fill="url(#gCtl)" /><rect x="1868.7" y="1263.6" width="546" height="2.4" fill="#2c2c2c" /><rect x="2141" y="1264" width="1.8" height="62" fill="#2c2c2c" /><circle cx="1931.3" cy="1295.7" r="19" fill="url(#gCtlC)"/><circle cx="2356.2" cy="1295.7" r="19" fill="url(#gCtlC)"/><path d="M1929.8 1286.6 L1922 1295.8 L1929.8 1304 M1938 1286.6 L1930.2 1295.8 L1938 1304" stroke="#2e2e2e" stroke-width="2.8" fill="none" stroke-linecap="round"/><path d="M2349.6 1286.9 L2357.4 1296 L2349.6 1304.3 M2357.8 1286.9 L2365.6 1296 L2357.8 1304.3" stroke="#2e2e2e" stroke-width="2.8" fill="none" stroke-linecap="round"/><text x="1983.0" y="1312.0" font-size="44" fill="#363636" textLength="103.0" lengthAdjust="spacingAndGlyphs" font-weight="bold" >Back</text><text x="2197.5" y="1311.8" font-size="44" fill="#363636" textLength="104.0" lengthAdjust="spacingAndGlyphs" font-weight="bold" >Next</text><rect x="2406" y="66" width="8" height="1137.5" fill="url(#gShadowR)" /></svg>
<script>
(function(){
var PW_=2.0,SPAN_=0.066;var cv=document.getElementById('cie');var ctx=cv.getContext('2d');
var PX1=1615,PY1=299,PW=710,PH=666;
var U0=1614.8,USC=1133.6,V0=962.2,VSC=1058.9;
var loc=[[0.1726,0.0048],[0.1721,0.0048],[0.1714,0.0051],[0.1703,0.0058],[0.1689,0.0069],[0.1669,0.0086],[0.1644,0.0109],[0.1611,0.0138],[0.1566,0.0177],[0.1510,0.0227],[0.1440,0.0297],[0.1355,0.0399],[0.1241,0.0578],[0.1096,0.0868],[0.0913,0.1327],[0.0687,0.2007],[0.0454,0.2950],[0.0235,0.4127],[0.0082,0.5384],[0.0039,0.6548],[0.0139,0.7502],[0.0389,0.8120],[0.0743,0.8338],[0.1142,0.8262],[0.1547,0.8059],[0.1929,0.7816],[0.2296,0.7543],[0.2658,0.7243],[0.3016,0.6923],[0.3373,0.6589],[0.3731,0.6245],[0.4087,0.5896],[0.4441,0.5547],[0.4788,0.5202],[0.5125,0.4866],[0.5448,0.4544],[0.5752,0.4242],[0.6029,0.3965],[0.6270,0.3725],[0.6482,0.3514],[0.6658,0.3340],[0.6801,0.3197],[0.6915,0.3083],[0.7006,0.2993],[0.7079,0.2920],[0.7140,0.2859],[0.7190,0.2809],[0.7230,0.2770],[0.7260,0.2740],[0.7283,0.2717],[0.7300,0.2700],[0.7311,0.2689],[0.7320,0.2680],[0.7334,0.2666]];
function uv(x,y){var d=-2*x+12*y+3;return [4*x/d,9*y/d];}
function toPx(u,v){return [U0+u*USC-PX1, V0-v*VSC-PY1];}
var W=PW,H=PH;cv.width=W;cv.height=H;
var img=ctx.createImageData(W,H);var D=img.data;
// triangle rec709 in px
var tri=[uv(0.64,0.33),uv(0.30,0.60),uv(0.15,0.06)].map(function(p){return toPx(p[0],p[1]);});
function side(ax,ay,bx,by,px,py){return (bx-ax)*(py-ay)-(by-ay)*(px-ax);}
var cx_=(tri[0][0]+tri[1][0]+tri[2][0])/3,cy_=(tri[0][1]+tri[1][1]+tri[2][1])/3;var SG=side(tri[0][0],tri[0][1],tri[1][0],tri[1][1],cx_,cy_)>0?1:-1;
var M=[[0.753,0.216,0.032],[0.053,0.939,0.003],[0.017,0.080,0.956]];
function enc(c){c=c<0?0:(c>1?1:c);return c<=0.0031308?12.92*c:1.055*Math.pow(c,1/2.4)-0.055;}
for(var j=0;j<H;j++){for(var i=0;i<W;i++){
 var px=i+0.5,py=j+0.5;
 var u=(px+PX1-U0)/USC,v=(V0-(py+PY1))/VSC;
 var dd=6*u-16*v+12;var x=9*u/dd,y=4*v/dd;if(y<=0.001)y=0.001;
 var X=x/y,Y=1,Z=(1-x-y)/y;
 var r=3.2406*X-1.5372*Y-0.4986*Z,g=-0.9689*X+1.8758*Y+0.0415*Z,b=0.0557*X-0.2040*Y+1.0570*Z;
 if(r<0)r=0;if(g<0)g=0;if(b<0)b=0;var m=Math.max(r,g,b);if(m<=0)m=1;r=Math.pow(r/m,PW_);g=Math.pow(g/m,PW_);b=Math.pow(b/m,PW_);
 var R2=M[0][0]*r+M[0][1]*g+M[0][2]*b,G2=M[1][0]*r+M[1][1]*g+M[1][2]*b,B2=M[2][0]*r+M[2][1]*g+M[2][2]*b;
 var dmin=1e9;for(var e=0;e<3;e++){var a=tri[e],c=tri[(e+1)%3];var L=Math.sqrt((c[0]-a[0])*(c[0]-a[0])+(c[1]-a[1])*(c[1]-a[1]));var dd2=SG*side(a[0],a[1],c[0],c[1],px,py)/L;if(dd2<dmin)dmin=dd2;}
 var cov=dmin/1.4+0.5;cov=cov<0?0:(cov>1?1:cov);
 var k=0.6+0.4*cov;var o=(j*W+i)*4;
 D[o]=enc(R2)*255*k;D[o+1]=enc(G2)*255*k;D[o+2]=enc(B2)*255*k;D[o+3]=255;
}}
ctx.putImageData(img,0,0);
ctx.globalCompositeOperation='destination-in';
ctx.beginPath();
var P=loc.map(function(a){var p=uv(a[0],a[1]);return toPx(p[0],p[1]);});
for(var n=0;n<P.length-1;n++){var p0=P[Math.max(n-1,0)],p1=P[n],p2=P[n+1],p3=P[Math.min(n+2,P.length-1)];
 for(var t=0;t<1;t+=0.125){var t2=t*t,t3=t2*t;
  var xx=0.5*((2*p1[0])+(-p0[0]+p2[0])*t+(2*p0[0]-5*p1[0]+4*p2[0]-p3[0])*t2+(-p0[0]+3*p1[0]-3*p2[0]+p3[0])*t3);
  var yy=0.5*((2*p1[1])+(-p0[1]+p2[1])*t+(2*p0[1]-5*p1[1]+4*p2[1]-p3[1])*t2+(-p0[1]+3*p1[1]-3*p2[1]+p3[1])*t3);
  if(n==0&&t==0)ctx.moveTo(xx,yy);else ctx.lineTo(xx,yy);}}
ctx.lineTo(P[P.length-1][0],P[P.length-1][1]);
ctx.closePath();ctx.fillStyle='#fff';ctx.fill();
// inset
var ci=document.getElementById('inset');var c2=ci.getContext('2d');var IW=188,IH=179;ci.width=IW;ci.height=IH;
var im2=c2.createImageData(IW,IH);var E=im2.data;
var wu=0.1978,wv=0.4683,span=SPAN_;
for(var j=0;j<IH;j++){for(var i=0;i<IW;i++){
 var u=wu+(i-94)/IW*span*1.0, v=wv-(j-88)/IH*span*0.95;
 var dd=6*u-16*v+12;var x=9*u/dd,y=4*v/dd;
 var X=x/y,Y=1,Z=(1-x-y)/y;
 var r=3.2406*X-1.5372*Y-0.4986*Z,g=-0.9689*X+1.8758*Y+0.0415*Z,b=0.0557*X-0.2040*Y+1.0570*Z;
 if(r<0)r=0;if(g<0)g=0;if(b<0)b=0;var m=Math.max(r,g,b);r=Math.pow(r/m,PW_);g=Math.pow(g/m,PW_);b=Math.pow(b/m,PW_);
 var R2=M[0][0]*r+M[0][1]*g+M[0][2]*b,G2=M[1][0]*r+M[1][1]*g+M[1][2]*b,B2=M[2][0]*r+M[2][1]*g+M[2][2]*b;
 var o=(j*IW+i)*4;E[o]=enc(R2)*255;E[o+1]=enc(G2)*255;E[o+2]=enc(B2)*255;E[o+3]=255;
}}
c2.putImageData(im2,0,0);
})();
</script>
</body></html>
